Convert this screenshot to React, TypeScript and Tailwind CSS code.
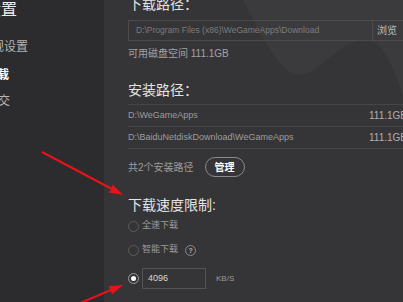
import React from 'react';

const paths = [
  { path: 'D:\\WeGameApps', size: '111.1GB' },
  { path: 'D:\\BaiduNetdiskDownload\\WeGameApps', size: '111.1GB' },
];

const Radio: React.FC<{ checked?: boolean }> = ({ checked }) => (
  <span
    className={`flex h-[11px] w-[11px] shrink-0 items-center justify-center rounded-full border ${
      checked ? 'border-[#9a9a9a]' : 'border-[#5c5c5e]'
    }`}
  >
    {checked && <span className="h-[5px] w-[5px] rounded-full bg-white" />}
  </span>
);

export default function App() {
  return (
    <div className="relative flex h-[302px] w-[403px] overflow-hidden font-['Liberation_Sans','Noto_Sans_CJK_SC',sans-serif] select-none">
      {/* sidebar */}
      <div className="w-[104px] shrink-0 bg-[#2c2c2e]">
        <div className="ml-[-15px] h-5 text-[16px] leading-5 text-[#ececec]">设置</div>
        <div className="ml-[-20px] mt-[19px] h-4 text-[12px] leading-4 text-[#b4b4b4]">常规设置</div>
        <div className="ml-[-15px] mt-[12px] h-4 text-[12px] font-bold leading-4 text-white">下载</div>
        <div className="ml-[-14px] mt-[10px] h-4 text-[12px] leading-4 text-[#b4b4b4]">社交</div>
      </div>

      {/* main panel */}
      <div className="relative flex-1 overflow-hidden bg-[#353537] pl-6">
        <svg className="absolute left-0 top-0" width="299" height="302" viewBox="0 0 299 302">
          <path
            d="M139 0 C155 30 175 75 196 75 C215 75 235 40 261 40 C280 40 290 70 299 95 L299 0 Z"
            fill="#ffffff"
            fillOpacity="0.03"
          />
        </svg>

        <div className="relative w-[320px]">
          <div className="mt-[-6px] h-5 text-[14px] leading-5 text-[#e4e4e4]">下载路径：</div>

          <div className="mt-[6px] flex h-[21px]">
            <div className="flex w-[245px] items-center border border-[#4b4b4d] pl-[7px] text-[8.5px] text-[#7c7c7e]">
              D:\Program Files (x86)\WeGameApps\Download
            </div>
            <div className="flex w-[44px] items-center border border-l-0 border-[#4b4b4d] pl-[4px] text-[10px] text-[#bdbdbd]">
              浏览
            </div>
          </div>

          <div className="mt-[5px] h-4 text-[10px] leading-4 text-[#a2a2a4]">可用磁盘空间 111.1GB</div>

          <div className="mt-[18px] h-5 text-[14px] leading-5 text-[#e4e4e4]">安装路径：</div>

          <div className="mt-[4px] w-[290px] border-t border-[#464648]">
            {paths.map((p) => (
              <div
                key={p.path}
                className="grid h-[22px] grid-cols-[241px_1fr] items-center border-b border-[#464648] text-[9px] text-[#9c9c9e]"
              >
                <span>{p.path}</span>
                <span className="text-[10px] text-[#b0b0b2]">{p.size}</span>
              </div>
            ))}
          </div>

          <div className="mt-[8px] flex h-5 items-center gap-[11px]">
            <span className="text-[10px] text-[#9c9c9e]">共2个安装路径</span>
            <button className="flex h-5 w-[40px] items-center justify-center rounded-full border border-[#8a8a8c] text-[10px] font-bold text-white">
              管理
            </button>
          </div>

          <div className="mt-[18px] h-5 text-[14px] leading-5 text-[#e4e4e4]">下载速度限制:</div>

          <div className="mt-[3px] flex h-4 items-center gap-[3px]">
            <Radio />
            <span className="text-[9px] text-[#9a9a9c]">全速下载</span>
          </div>

          <div className="mt-[8px] flex h-4 items-center gap-[3px]">
            <Radio />
            <span className="text-[9px] text-[#9a9a9c]">智能下载</span>
            <span className="ml-[4px] flex h-[11px] w-[11px] items-center justify-center rounded-full border border-[#8a8a8c] text-[7px] font-bold leading-none text-[#b0b0b2]">
              ?
            </span>
          </div>

          <div className="mt-[10px] flex h-[21px] items-center gap-[3px]">
            <Radio checked />
            <div className="flex h-[21px] w-[64px] items-center border border-[#545456] pl-[5px] text-[9px] text-[#d8d8d8]">
              4096
            </div>
            <span className="ml-[7px] text-[8px] text-[#9a9a9c]">KB/S</span>
          </div>
        </div>
      </div>

      {/* red annotation arrows */}
      <svg className="pointer-events-none absolute left-0 top-0" width="403" height="302" viewBox="0 0 403 302">
        <line x1="42" y1="152" x2="112" y2="189" stroke="#e8121a" strokeWidth="2" />
        <path d="M123 195 L108.5 192.5 L111.5 189.5 L112.7 184.5 Z" fill="#e8121a" />
        <line x1="78" y1="304" x2="111" y2="290" stroke="#e8121a" strokeWidth="2" />
        <path d="M123 285 L111.85 294.5 L110.8 290.6 L108.35 286.25 Z" fill="#e8121a" />
      </svg>
    </div>
  );
}
